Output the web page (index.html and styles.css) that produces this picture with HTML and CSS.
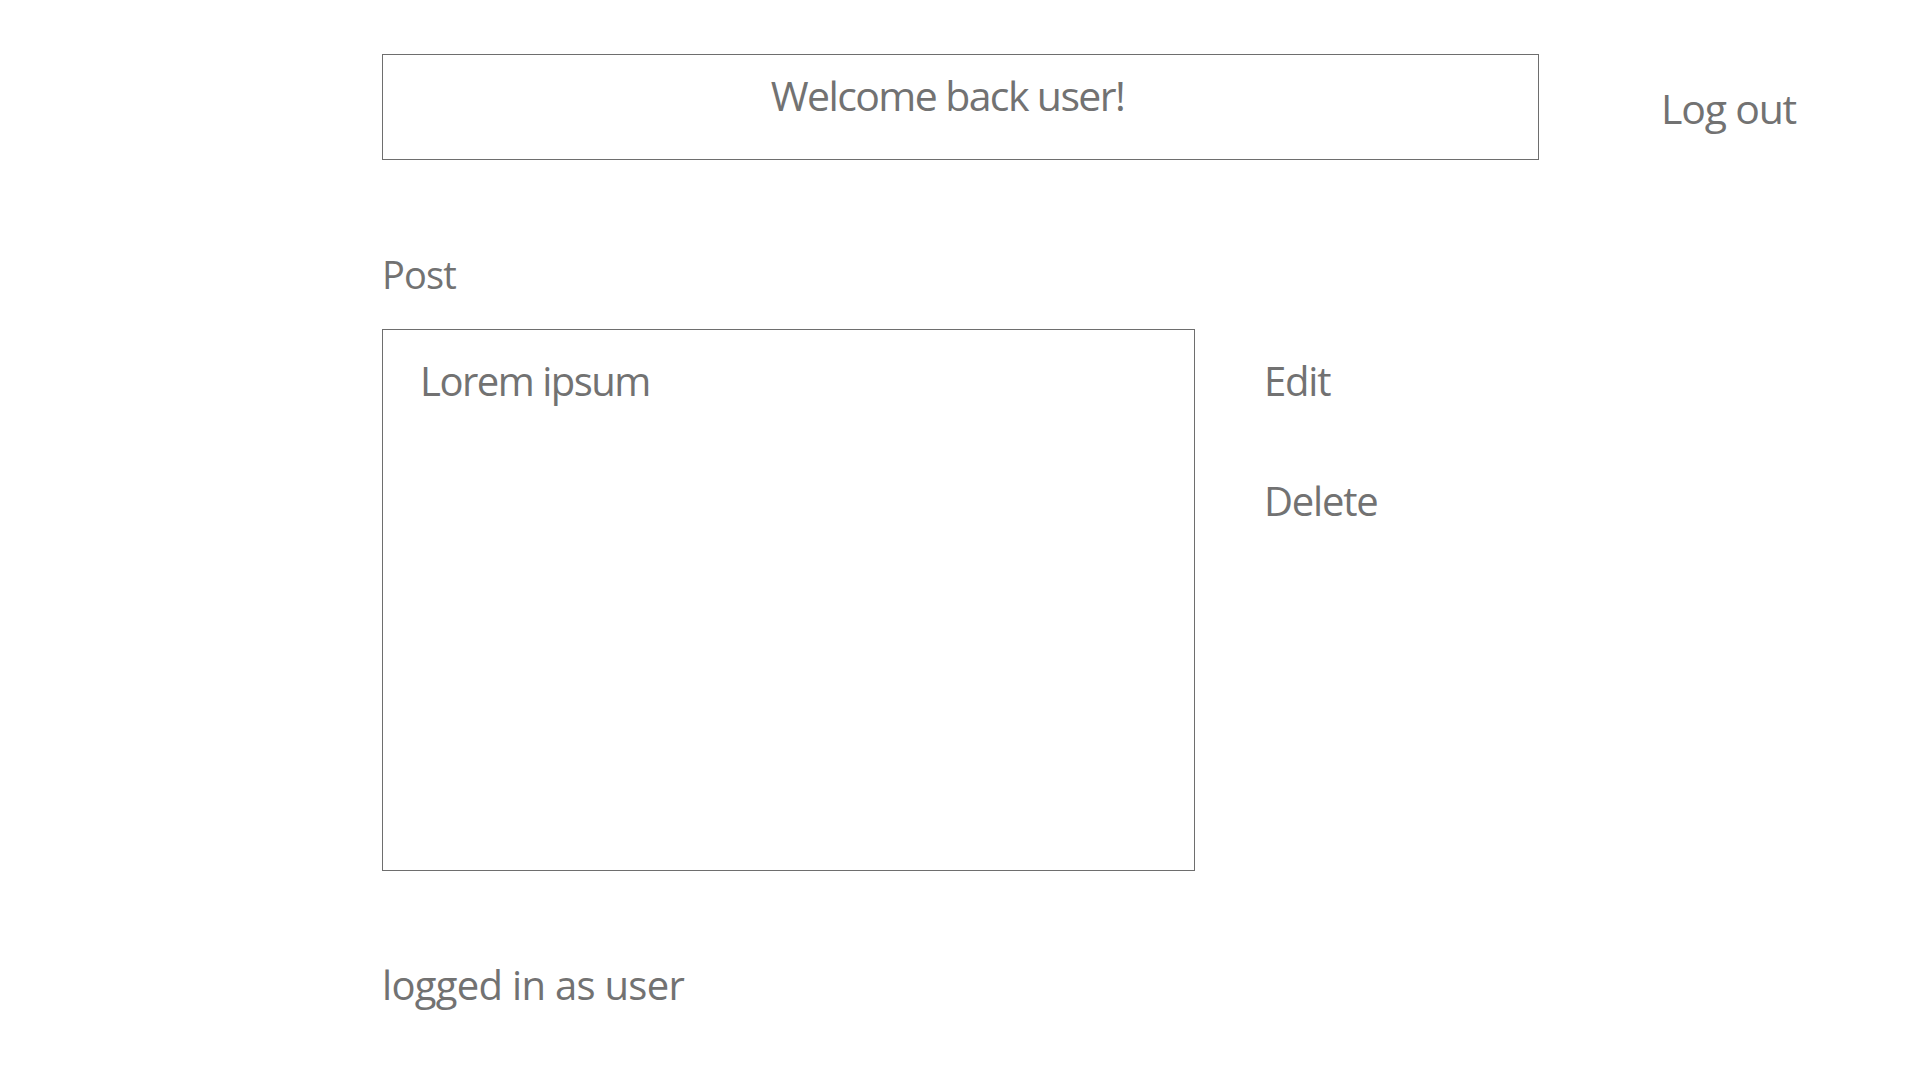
FILE: index.html
```html
<!DOCTYPE html>
<html lang="en">
<head>
<meta charset="utf-8">
<title>Welcome back</title>
<link rel="stylesheet" href="styles.css">
</head>
<body>
<div class="page">
  <header class="top">
    <div class="welcome"><span class="welcome-text">Welcome back user!</span></div>
    <a class="logout" href="#">Log out</a>
  </header>
  <div class="post-label">Post</div>
  <section class="post-row">
    <div class="post-box"><div class="post-text">Lorem ipsum</div></div>
    <div class="actions">
      <a class="action" href="#">Edit</a>
      <a class="action" href="#">Delete</a>
    </div>
  </section>
  <footer class="status">logged in as user</footer>
</div>
</body>
</html>
```
FILE: styles.css
```css
html, body {
  margin: 0;
  padding: 0;
  background: #ffffff;
}
body {
  font-family: "Open Sans", "Noto Sans", sans-serif;
  font-weight: 400;
  color: #727272;
}
.page {
  padding-left: 382px;
  padding-top: 54px;
  padding-bottom: 60px;
}
.top {
  display: flex;
  align-items: flex-start;
}
.welcome {
  box-sizing: border-box;
  width: 1157px;
  height: 106px;
  border: 1px solid #6e6e6e;
  text-align: center;
  padding-top: 20px;
  padding-right: 26px;
}
.welcome-text {
  font-size: 41px;
  line-height: 1;
  letter-spacing: -1.6px;
  display: inline-block;
}
.logout {
  margin-left: 122px;
  margin-top: 34px;
  font-size: 41px;
  line-height: 1;
  letter-spacing: -1.2px;
  color: inherit;
  text-decoration: none;
}
.post-label {
  margin-top: 95px;
  font-size: 38px;
  line-height: 1;
  letter-spacing: -0.9px;
}
.post-row {
  display: flex;
  align-items: flex-start;
  margin-top: 36px;
}
.post-box {
  box-sizing: border-box;
  width: 813px;
  height: 542px;
  border: 1px solid #6e6e6e;
  padding: 31px 0 0 37px;
}
.post-text {
  font-size: 40px;
  line-height: 1;
  letter-spacing: -1.5px;
}
.actions {
  display: flex;
  flex-direction: column;
  gap: 80px;
  margin-left: 69px;
  margin-top: 32px;
}
.action {
  font-size: 40px;
  line-height: 1;
  letter-spacing: -1.2px;
  color: inherit;
  text-decoration: none;
}
.status {
  margin-top: 94px;
  font-size: 40px;
  line-height: 1;
  letter-spacing: -0.7px;
}
```
